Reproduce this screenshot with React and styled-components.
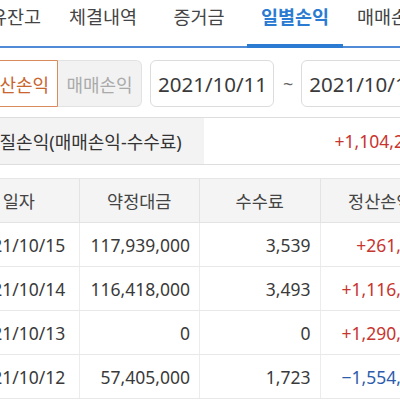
import React from "react";
import styled, { createGlobalStyle } from "styled-components";

const GlobalStyle = createGlobalStyle`
  html, body {
    margin: 0;
    padding: 0;
    background: #fff;
  }
  body {
    font-family: "Noto Sans", "Noto Sans CJK KR", sans-serif;
    color: #333;
  }
`;

const tabs = ["보유잔고", "체결내역", "증거금", "일별손익", "매매손익"];

const rows = [
  { date: "2021/10/15", amount: "117,939,000", fee: "3,539", pl: "+261,450" },
  { date: "2021/10/14", amount: "116,418,000", fee: "3,493", pl: "+1,116,320" },
  { date: "2021/10/13", amount: "0", fee: "0", pl: "+1,290,150" },
  { date: "2021/10/12", amount: "57,405,000", fee: "1,723", pl: "-1,554,530" },
];

const App = () => {
  return (
    <Viewport>
      <GlobalStyle />
      <Page>
        <TabBar>
          {tabs.map((t) => (
            <Tab key={t} $active={t === "일별손익"}>
              {t}
            </Tab>
          ))}
        </TabBar>

        <Controls>
          <Segment>
            <SegButton $active>정산손익</SegButton>
            <SegButton>매매손익</SegButton>
          </Segment>
          <DateBox>2021/10/11</DateBox>
          <Tilde>~</Tilde>
          <DateBox>2021/10/15</DateBox>
        </Controls>

        <Summary>
          <SummaryLabel>실질손익(매매손익-수수료)</SummaryLabel>
          <SummaryValue $sign="+">+1,104,250</SummaryValue>
        </Summary>

        <Table>
          <HeadRow>
            <HeadCell>일자</HeadCell>
            <HeadCell>약정대금</HeadCell>
            <HeadCell>수수료</HeadCell>
            <HeadCell>정산손익</HeadCell>
          </HeadRow>
          {rows.map((r) => (
            <Row key={r.date}>
              <Cell $center>{r.date}</Cell>
              <Cell>{r.amount}</Cell>
              <Cell>{r.fee}</Cell>
              <Cell $sign={r.pl[0]}>{r.pl.replace("-", "−")}</Cell>
            </Row>
          ))}
        </Table>
      </Page>
    </Viewport>
  );
};

export default App;

const Viewport = styled.div`
  width: 400px;
  height: 400px;
  overflow: hidden;
`;

const Page = styled.div`
  width: 482px;
  margin-left: -41px;
`;

const TabBar = styled.div`
  display: flex;
  height: 46px;
  border-bottom: 2px solid #4f8bd6;
`;

const Tab = styled.div`
  width: 96px;
  flex-shrink: 0;
  box-sizing: border-box;
  text-align: center;
  padding-top: 3px;
  font-size: 18.5px;
  font-weight: ${(p) => (p.$active ? 600 : 400)};
  color: ${(p) => (p.$active ? "#2c7bd2" : "#444")};
  border-bottom: ${(p) => (p.$active ? "4px solid #2c7bd2" : "none")};
  margin-bottom: ${(p) => (p.$active ? "-2px" : "0")};
`;

const Controls = styled.div`
  display: flex;
  align-items: center;
  padding: 12px 0 0 15px;
  height: 47px;
`;

const Segment = styled.div`
  display: flex;
  height: 47px;
`;

const SegButton = styled.div`
  width: 84px;
  box-sizing: border-box;
  display: flex;
  align-items: center;
  justify-content: center;
  font-size: 18px;
  border: 1px solid ${(p) => (p.$active ? "#d98a5e" : "#e2e2e2")};
  background: ${(p) => (p.$active ? "#fff" : "#f2f2f2")};
  color: ${(p) => (p.$active ? "#c9652e" : "#aaa")};
  border-radius: ${(p) => (p.$active ? "6px 0 0 6px" : "0 6px 6px 0")};
  border-left: ${(p) => (p.$active ? "" : "none")};
`;

const DateBox = styled.div`
  margin-left: 8px;
  width: 124px;
  height: 47px;
  box-sizing: border-box;
  border: 1px solid #dcdcdc;
  border-radius: 6px;
  display: flex;
  align-items: center;
  padding-left: 7px;
  font-size: 20.5px;
  color: #3a3a3a;
  white-space: nowrap;
  overflow: hidden;
  flex-shrink: 0;
`;

const Tilde = styled.div`
  margin-left: 9px;
  font-size: 18px;
  color: #666;
`;

const Summary = styled.div`
  margin-top: 10px;
  display: flex;
  height: 46px;
  border-top: 1px solid #dedede;
  border-bottom: 1px solid #dedede;
`;

const SummaryLabel = styled.div`
  width: 50%;
  background: #f3f3f3;
  display: flex;
  align-items: center;
  padding-left: 24px;
  font-size: 18px;
  color: #333;
`;

const SummaryValue = styled.div`
  width: 50%;
  display: flex;
  align-items: center;
  justify-content: flex-end;
  padding-right: 17px;
  font-size: 17.5px;
  color: ${(p) => (p.$sign === "+" ? "#c8352f" : "#2c5cab")};
`;

const Table = styled.div`
  margin-top: 13px;
  border-top: 1px solid #e6e6e6;
`;

const HeadRow = styled.div`
  display: grid;
  grid-template-columns: repeat(4, 1fr);
  height: 43px;
  background: #f4f4f4;
  border-bottom: 1px solid #e3e3e3;
`;

const HeadCell = styled.div`
  display: flex;
  align-items: center;
  justify-content: center;
  font-size: 17.5px;
  color: #444;
  border-right: 1px solid #e3e3e3;
`;

const Row = styled.div`
  display: grid;
  grid-template-columns: repeat(4, 1fr);
  height: 43px;
  border-bottom: 1px solid #e8e8e8;
`;

const Cell = styled.div`
  display: flex;
  align-items: center;
  justify-content: ${(p) => (p.$center ? "center" : "flex-end")};
  padding-right: ${(p) => (p.$center ? "0" : "9px")};
  font-size: 17.5px;
  white-space: nowrap;
  border-right: 1px solid #ececec;
  color: ${(p) =>
    p.$sign === "+" ? "#c8352f" : p.$sign === "-" ? "#2c5cab" : "#3a3a3a"};
`;
